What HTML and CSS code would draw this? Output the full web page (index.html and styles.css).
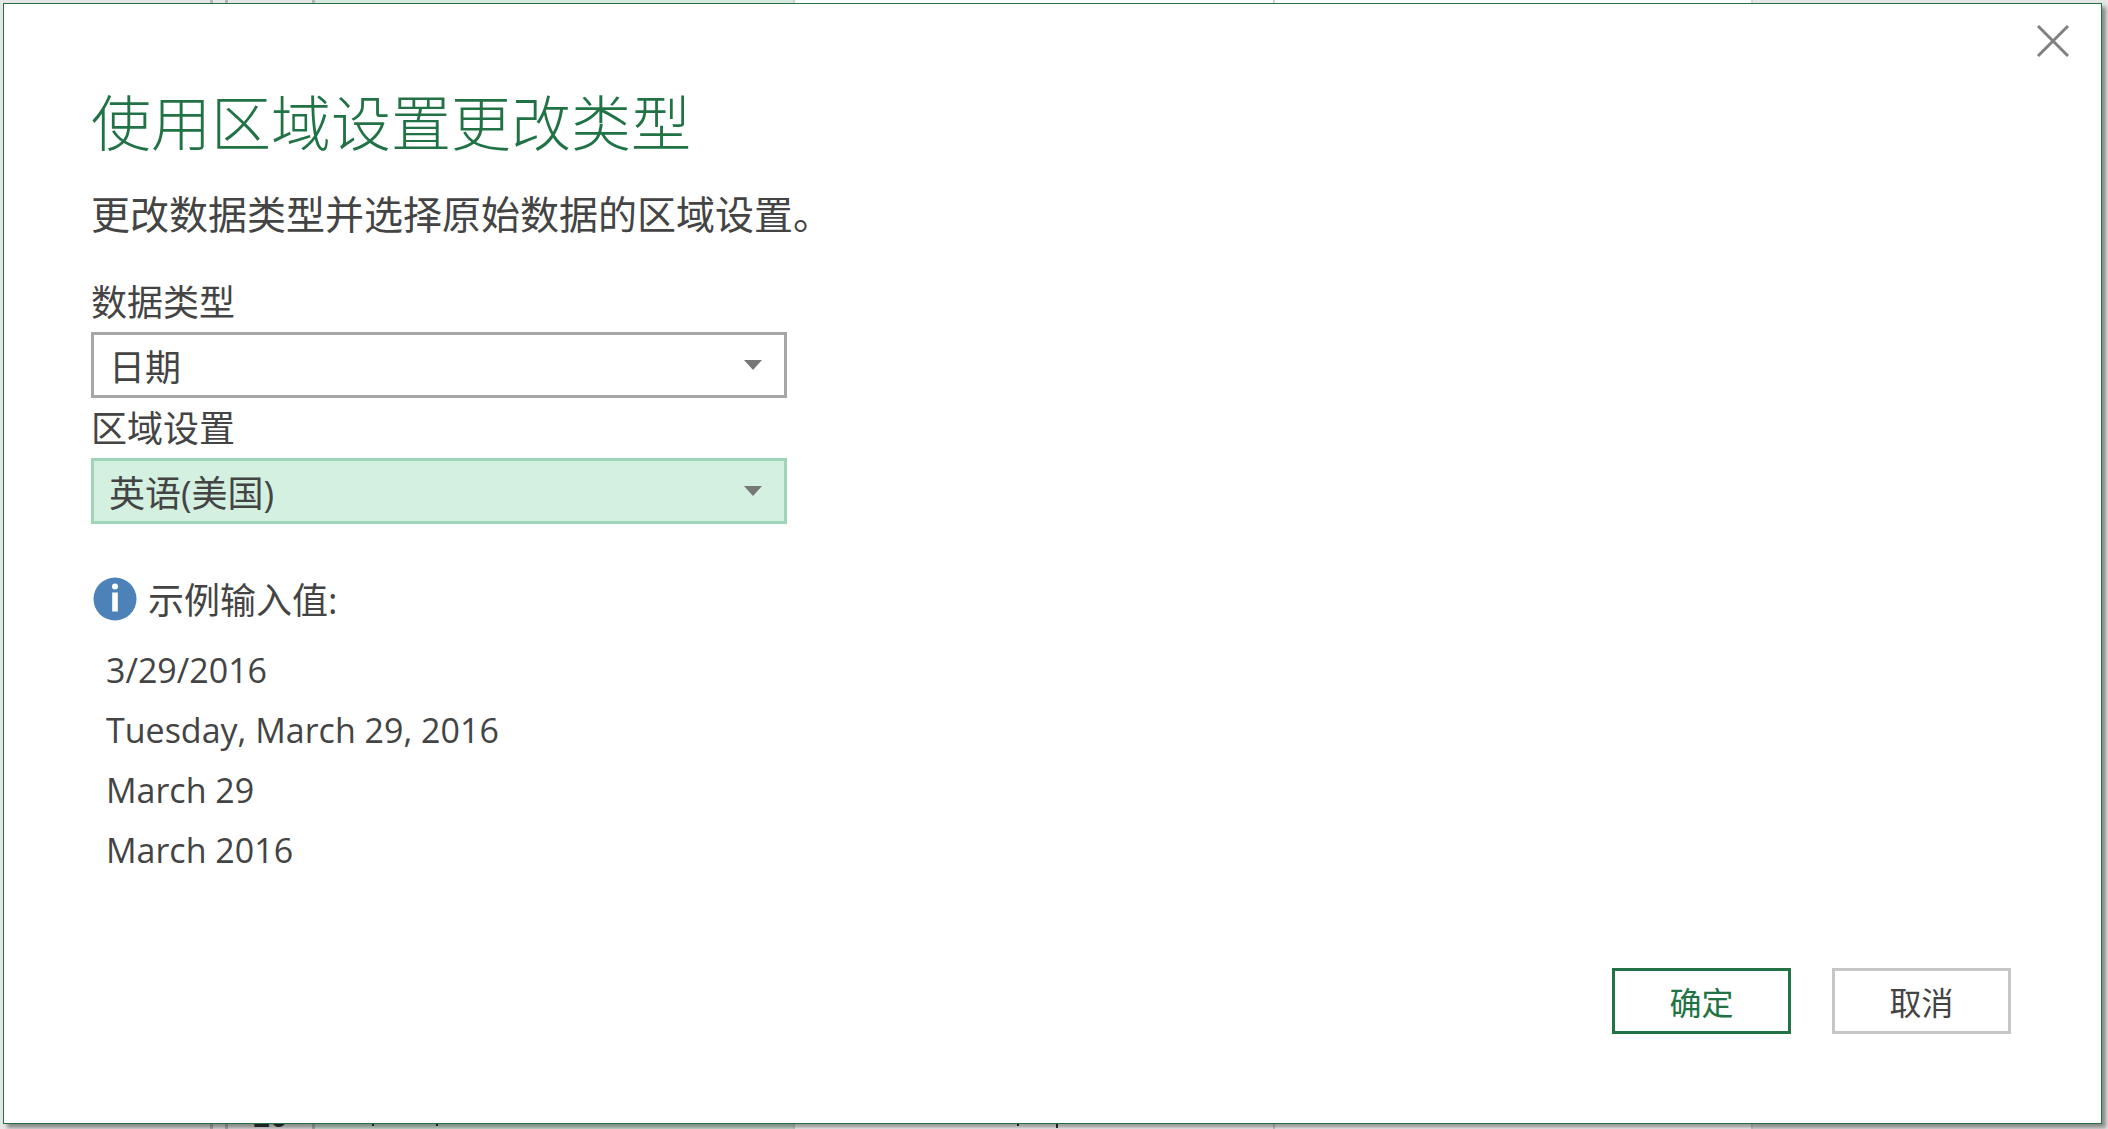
FILE: index.html
```html
<!DOCTYPE html>
<html lang="zh-CN">
<head>
    <meta charset="UTF-8">
    <title>使用区域设置更改类型</title>
    <link rel="stylesheet" href="styles.css">
</head>
<body>
    <div class="strip strip-top">
        <div class="cell head w1"></div>
        <div class="cell head w2"></div>
        <div class="cell head w3"></div>
        <div class="cell green w4"></div>
        <div class="cell plain w5"></div>
        <div class="cell plain w6"></div>
        <div class="cell rest"></div>
    </div>
    <div class="dialog">
        <svg class="close-icon" width="34" height="34" viewBox="0 0 34 34">
            <path d="M2 2 L32 32 M32 2 L2 32" stroke="#808080" stroke-width="3" fill="none"/>
        </svg>
        <h1 class="title">使用区域设置更改类型</h1>
        <p class="subtitle">更改数据类型并选择原始数据的区域设置。</p>
        <label class="field-label">数据类型</label>
        <div class="select">
            <span>日期</span>
            <span class="arrow"></span>
        </div>
        <label class="field-label">区域设置</label>
        <div class="select active">
            <span>英语(美国)</span>
            <span class="arrow"></span>
        </div>
        <div class="info-row">
            <svg width="44" height="44" viewBox="0 0 44 44">
                <circle cx="22" cy="22" r="21.5" fill="#4d82b8"/>
                <circle cx="22" cy="9.5" r="3" fill="#fff"/>
                <rect x="19.2" y="15.5" width="5.6" height="19" fill="#fff"/>
            </svg>
            <span>示例输入值:</span>
        </div>
        <ul class="samples">
            <li>3/29/2016</li>
            <li>Tuesday, March 29, 2016</li>
            <li>March 29</li>
            <li>March 2016</li>
        </ul>
        <div class="buttons">
            <button class="btn primary">确定</button>
            <button class="btn">取消</button>
        </div>
    </div>
    <div class="strip strip-bottom">
        <div class="cell head w1"></div>
        <div class="cell head w2"></div>
        <div class="cell head w3"><span class="row-num">20</span></div>
        <div class="cell green w4"><span class="tick t1"></span><span class="tick t2"></span></div>
        <div class="cell plain w5"><span class="tick t3"></span><span class="tick t4"></span></div>
        <div class="cell plain w6"></div>
        <div class="cell rest"></div>
    </div>
</body>
</html>
```

FILE: styles.css
```css
html, body {
    margin: 0;
}
body {
    width: 2108px;
    height: 1129px;
    overflow: hidden;
    background-color: #e6e6e6;
    font-family: "Open Sans", "Noto Sans CJK SC", sans-serif;
    color: #444;
}
.strip {
    display: flex;
    overflow: hidden;
}
.strip-top {
    height: 3px;
}
.strip-bottom {
    height: 5px;
}
.cell {
    box-sizing: border-box;
    display: flex;
    align-items: flex-end;
    overflow: hidden;
}
.head {
    background-color: #e6e6e6;
    border-right: 3px solid #b5b5b5;
}
.green {
    background-color: #d3eadc;
    border-right: 2px solid #d4d4d4;
}
.plain {
    background-color: white;
    border-right: 2px solid #d4d4d4;
}
.rest {
    flex: 1;
    background-color: #e6e6e6;
}
.w1 { width: 213px; }
.w2 { width: 15px; }
.w3 { width: 87px; }
.w4 { width: 480px; }
.w5 { width: 480px; }
.w6 { width: 478px; }
.row-num {
    margin: 0 0 -2px 25px;
    font-size: 30px;
    line-height: 30px;
    font-weight: 600;
    color: #333;
}
.tick {
    align-self: flex-start;
    width: 2px;
    height: 2px;
    background-color: #333;
}
.t1 { margin-left: 57px; }
.t2 { margin-left: 62px; }
.t3 { margin-left: 222px; }
.t4 { margin-left: 37px; height: 4px; }
.dialog {
    position: relative;
    z-index: 1;
    box-sizing: border-box;
    width: 2099px;
    height: 1121px;
    margin-left: 3px;
    padding-left: 87px;
    background-color: white;
    border: 1px solid #217346;
    box-shadow: 4px 4px 4px rgba(0,0,0,0.4);
}
.close-icon {
    position: absolute;
    top: 20px;
    right: 31px;
}
.title {
    margin: 0;
    padding-top: 78px;
    font-size: 60px;
    line-height: 76px;
    font-weight: 300;
    font-family: "Noto Sans CJK SC", sans-serif;
    color: #217346;
}
.subtitle {
    margin: 34px 0 44px;
    font-size: 39px;
    line-height: 44px;
}
.field-label {
    display: block;
    margin: 8px 0 6px;
    font-size: 36px;
    line-height: 46px;
}
.select {
    box-sizing: border-box;
    display: flex;
    justify-content: space-between;
    align-items: center;
    width: 696px;
    height: 66px;
    padding: 0 22px 0 15px;
    font-size: 36px;
    border: 3px solid #a6a6a6;
}
.select.active {
    background-color: #d3f0e0;
    border-color: #9fd5b7;
}
.arrow {
    width: 0;
    height: 0;
    border-left: 9px solid transparent;
    border-right: 9px solid transparent;
    border-top: 10px solid #777;
}
.info-row {
    display: flex;
    align-items: center;
    gap: 11px;
    margin: 48px 0 0 2px;
    font-size: 36px;
}
.samples {
    list-style: none;
    margin: 15px 0 0;
    padding: 0 0 0 15px;
    font-size: 34px;
}
.samples li {
    height: 60px;
    line-height: 60px;
}
.buttons {
    position: absolute;
    right: 90px;
    bottom: 89px;
    display: flex;
    gap: 41px;
}
.btn {
    box-sizing: border-box;
    width: 179px;
    height: 66px;
    font-size: 32px;
    font-family: "Noto Sans CJK SC", sans-serif;
    color: #444;
    background-color: white;
    border: 3px solid #c6c6c6;
}
.btn.primary {
    color: #217346;
    border-color: #217346;
}
```
